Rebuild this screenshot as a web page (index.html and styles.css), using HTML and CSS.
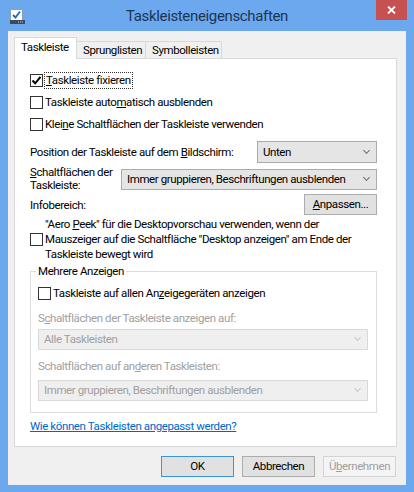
FILE: index.html
```html
<!DOCTYPE html>
<html lang="de">
<head>
<meta charset="utf-8">
<title>Taskleisteneigenschaften</title>
<link rel="stylesheet" href="styles.css">
</head>
<body>
<div class="window">
  <header class="titlebar">
    <svg class="app-icon" width="17" height="16" viewBox="0 0 17 16">
      <rect x="1.5" y="0.5" width="12" height="11" fill="#fff" stroke="#8aa0b8"/>
      <path d="M4 6 L6.5 8.5 L11 2.5" fill="none" stroke="#1f6fd0" stroke-width="2"/>
      <rect x="1" y="11" width="15" height="4" fill="#3b4a5e"/>
      <rect x="9" y="12.5" width="1" height="1" fill="#cfd8e4"/>
      <rect x="11" y="12.5" width="1" height="1" fill="#cfd8e4"/>
      <rect x="13" y="12.5" width="1" height="1" fill="#cfd8e4"/>
    </svg>
    <h1 class="title">Taskleisteneigenschaften</h1>
    <button class="close" type="button" aria-label="Schließen">
      <svg width="9" height="8" viewBox="0 0 9 8"><path d="M1 0.5 L8 7.5 M8 0.5 L1 7.5" stroke="#fff" stroke-width="1.8"/></svg>
    </button>
  </header>

  <div class="client">
    <nav class="tabs">
      <span class="tab active">Taskleiste</span>
      <span class="tab tab-jump">Sprunglisten</span>
      <span class="tab tab-bars">Symbolleisten</span>
    </nav>

    <section class="panel">
      <div class="checks">
        <label class="check"><span class="box"><svg class="tick" width="11" height="11" viewBox="0 0 11 11"><path d="M1.5 5.5 L4.2 8.3 L9.5 1.8" fill="none" stroke="#000" stroke-width="2"/></svg></span><span class="focus"><u>T</u>askleiste fixieren</span></label>
        <label class="check"><span class="box"></span><span>Taskleiste auto<u>m</u>atisch ausblenden</span></label>
        <label class="check"><span class="box"></span><span>Klei<u>n</u>e Schaltflächen der Taskleiste verwenden</span></label>
      </div>

      <div class="field field-position">
        <span>Position der Taskleiste auf dem <u>B</u>ildschirm:</span>
        <div class="combo combo-short">Unten</div>
      </div>

      <div class="field field-buttons">
        <span class="two-line"><u>S</u>chaltflächen der<br>Taskleiste:</span>
        <div class="combo combo-wide">Immer gruppieren, Beschriftungen ausblenden</div>
      </div>

      <div class="field field-info">
        <span>Infobereich:</span>
        <button class="btn btn-customize" type="button"><u>A</u>npassen...</button>
      </div>

      <label class="check check-multi"><span class="box"></span><span>"Aero <u>P</u>eek" für die Desktopvorschau verwenden, wenn der<br>Mauszeiger auf die Schaltfläche "Desktop anzeigen" am Ende der<br>Taskleiste bewegt wird</span></label>

      <fieldset class="group">
        <legend>Mehrere Anzeigen</legend>
        <label class="check"><span class="box"></span><span>Taskleiste auf allen An<u>z</u>eigegeräten anzeigen</span></label>
        <div class="sub-label disabled">S<u>c</u>haltflächen der Taskleiste anzeigen auf:</div>
        <div class="combo disabled">Alle Taskleisten</div>
        <div class="sub-label sub-label-2 disabled">Schaltflächen auf an<u>d</u>eren Taskleisten:</div>
        <div class="combo combo-2 disabled">Immer gruppieren, Beschriftungen ausblenden</div>
      </fieldset>

      <a class="help" href="#">Wie können Taskleisten angepasst werden?</a>
    </section>

    <footer class="actions">
      <button class="btn btn-default" type="button">OK</button>
      <button class="btn" type="button">Abbrechen</button>
      <button class="btn btn-disabled" type="button">Ü<u>b</u>ernehmen</button>
    </footer>
  </div>
</div>
</body>
</html>
```

FILE: styles.css
```css
* {
  box-sizing: border-box;
}

html, body {
  margin: 0;
  padding: 0;
}

body {
  width: 414px;
  height: 492px;
  overflow: hidden;
  font-family: Roboto, "Segoe UI", sans-serif;
  font-size: 11.5px;
  letter-spacing: -0.4px;
  color: #000;
  background: #6ca8ee;
}

u {
  text-decoration: underline;
  text-underline-offset: 1px;
}

.window {
  height: 492px;
  display: flex;
  flex-direction: column;
}

/* ---------- title bar ---------- */
.titlebar {
  height: 31px;
  flex: none;
  display: grid;
  grid-template-columns: 1fr auto 1fr;
  align-items: start;
}

.app-icon {
  margin: 9px 0 0 9px;
}

.title {
  margin: 6px 0 0;
  font-size: 15px;
  letter-spacing: -0.35px;
  font-weight: normal;
  color: #1b3553;
  line-height: 20px;
}

.close {
  justify-self: end;
  width: 31px;
  height: 20px;
  margin-right: 7px;
  padding: 0;
  border: 0;
  background: #c75150;
  display: flex;
  align-items: center;
  justify-content: center;
}

/* ---------- client area ---------- */
.client {
  flex: 1;
  margin: 0 8px 9px;
  background: #f0f0f0;
  padding: 6px 9px 8px 6px;
  display: flex;
  flex-direction: column;
}

.tabs {
  display: flex;
  align-items: flex-end;
  height: 21px;
  position: relative;
  z-index: 1;
}

.tab {
  height: 17px;
  padding: 0 0 0 6px;
  border: 1px solid #d9d9d9;
  border-bottom: 0;
  background: #f0f0f0;
  line-height: 16px;
  margin-left: -1px;
  white-space: nowrap;
}

.tab:first-child {
  margin-left: 0;
}

.tab.active {
  width: 63px;
  height: 22px;
  padding: 1px 0 0 6px;
  background: #fff;
  line-height: 17px;
  margin-bottom: -1px;
}

.tab-jump {
  width: 70px;
}

.tab-bars {
  width: 77px;
}

.panel {
  height: 389px;
  flex: none;
  background: #fff;
  border: 1px solid #d9d9d9;
  padding: 10px 19px 0 15px;
  display: flex;
  flex-direction: column;
}

/* ---------- check boxes ---------- */
.check {
  display: flex;
  align-items: center;
  gap: 2px;
  height: 22px;
  white-space: nowrap;
}

.box {
  width: 13px;
  height: 13px;
  flex: none;
  border: 1px solid #333;
  background: #fff;
  display: flex;
}

.tick {
  display: block;
}

.focus {
  outline: 1px dotted #333;
  outline-offset: 0;
  padding: 0 1px;
  line-height: 15px;
}

.check-multi {
  height: auto;
  margin-top: 2px;
}

.check-multi span:last-child {
  line-height: 15px;
}

/* ---------- labelled rows ---------- */
.field {
  display: flex;
  align-items: center;
  justify-content: space-between;
  white-space: nowrap;
}

.field-position {
  height: 22px;
  margin-top: 6px;
}

.field-buttons {
  height: 26px;
  margin-top: 3px;
}

.two-line {
  line-height: 13px;
}

.field-info {
  height: 21px;
  margin-top: 2px;
}

.combo {
  height: 21px;
  border: 1px solid #acacac;
  background: #e5e5e5;
  padding: 0 0 0 5px;
  line-height: 19px;
  position: relative;
  white-space: nowrap;
}

.combo::after {
  content: "";
  position: absolute;
  right: 7px;
  top: 5px;
  width: 4px;
  height: 4px;
  border: solid #707070;
  border-width: 0 1.5px 1.5px 0;
  transform: rotate(45deg);
}

.combo-short {
  width: 120px;
  height: 22px;
  line-height: 20px;
}

.combo-short::after {
  top: 6px;
}

.combo-wide {
  width: 256px;
}

.combo.disabled {
  background: #efefef;
  border-color: #d9d9d9;
  color: #a0a0a0;
}

.combo.disabled::after {
  border-color: #c6c6c6;
}

/* ---------- buttons ---------- */
.btn {
  font: inherit;
  letter-spacing: inherit;
  height: 21px;
  width: 73px;
  padding: 0;
  border: 1px solid #adadad;
  background: #e1e1e1;
  color: #000;
  line-height: 19px;
}

.btn-default {
  border-color: #3c94da;
}

.btn-disabled {
  border-color: #d4d4d4;
  background: #f4f4f4;
  color: #a0a0a0;
}

/* ---------- group box ---------- */
.group {
  margin: 1px 0 0;
  padding: 0 8px 11px 7px;
  border: 1px solid #dcdcdc;
  min-width: 0;
}

.group legend {
  padding: 0 2px;
  margin-left: -2px;
  line-height: 16px;
}

.group .check {
  height: 20px;
  margin-top: 4px;
}

.sub-label {
  margin-top: 8px;
  line-height: 14px;
}

.sub-label-2 {
  margin-top: 9px;
}

.group .combo {
  margin-top: 4px;
}

.group .combo-2 {
  margin-top: 7px;
}

.disabled {
  color: #a0a0a0;
}

.help {
  margin-top: 6px;
  line-height: 14px;
  color: #0066cc;
  text-decoration: underline;
  align-self: flex-start;
}

/* ---------- dialog buttons ---------- */
.actions {
  margin-top: 9px;
  display: flex;
  justify-content: flex-end;
  gap: 8px;
  padding-right: 1px;
}
```
